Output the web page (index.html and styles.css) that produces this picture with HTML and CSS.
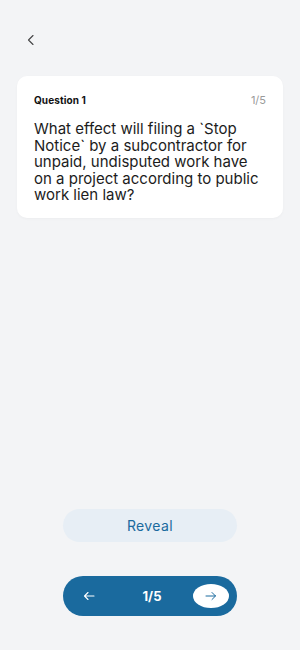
FILE: index.html
```html
<!DOCTYPE html>
<html>
<head>
<meta charset="utf-8">
<link rel="stylesheet" href="styles.css">
</head>
<body>
<div class="screen">
  <div class="topbar">
    <button class="back" aria-label="Back">
      <svg width="10" height="12" viewBox="0 0 10 12"><path d="M7 1.5 L2.5 6 L7 10.5" fill="none" stroke="#444" stroke-width="1.1" stroke-linecap="round" stroke-linejoin="round"/></svg>
    </button>
  </div>
  <div class="card">
    <div class="card-head">
      <span class="qlabel">Question 1</span>
      <span class="qcount">1/5</span>
    </div>
    <p class="qtext">What effect will filing a `Stop Notice` by a subcontractor for unpaid, undisputed work have on a project according to public work lien law?</p>
  </div>
  <div class="spacer"></div>
  <div class="actions">
    <button class="reveal">Reveal</button>
    <div class="pager">
      <button class="prev" aria-label="Previous">
        <svg width="12" height="10" viewBox="0 0 12 10"><path d="M11 5 H1.5 M5 1.5 L1.5 5 L5 8.5" fill="none" stroke="#fff" stroke-width="1.1" stroke-linecap="round" stroke-linejoin="round"/></svg>
      </button>
      <span class="page">1/5</span>
      <button class="next" aria-label="Next">
        <svg width="12" height="10" viewBox="0 0 12 10"><path d="M1 5 H10.5 M7 1.5 L10.5 5 L7 8.5" fill="none" stroke="#1a6a9e" stroke-width="1" stroke-linecap="round" stroke-linejoin="round"/></svg>
      </button>
    </div>
  </div>
</div>
</body>
</html>
```
FILE: styles.css
```css
html, body {
  margin: 0;
  padding: 0;
  background: #f3f4f6;
}
body {
  font-family: "Inter", "Noto Sans", sans-serif;
  color: #111;
}
.screen {
  width: 300px;
  height: 650px;
  display: flex;
  flex-direction: column;
  box-sizing: border-box;
}
.topbar {
  height: 76px;
  padding-left: 25px;
  padding-top: 33px;
  box-sizing: border-box;
}
.back {
  border: 0;
  background: none;
  padding: 0;
  width: 12px;
  height: 14px;
  display: flex;
  align-items: center;
  justify-content: center;
}
.card {
  margin: 0 17px;
  background: #fff;
  border-radius: 10px;
  padding: 18px 17px 14px 17px;
  box-shadow: 0 1px 3px rgba(0,0,0,0.03);
}
.card-head {
  display: flex;
  justify-content: space-between;
  align-items: center;
  height: 12px;
}
.qlabel {
  font-size: 10px;
  font-weight: 700;
  color: #111;
  letter-spacing: 0.1px;
}
.qcount {
  font-size: 11px;
  color: #9a9a9a;
}
.qtext {
  margin: 15px 0 0 0;
  font-size: 15px;
  line-height: 16.5px;
  font-weight: 400;
  color: #1c1c1c;
}
.spacer { flex: 1; }
.actions {
  display: flex;
  flex-direction: column;
  align-items: center;
  padding-bottom: 34px;
}
.reveal {
  width: 174px;
  height: 33px;
  border: 0;
  border-radius: 17px;
  background: #e7eef5;
  color: #1a6a9e;
  font-family: "Inter", "Noto Sans", sans-serif;
  font-size: 14px;
  font-weight: 400;
  letter-spacing: 0.4px;
}
.pager {
  margin-top: 34px;
  width: 174px;
  height: 40px;
  border-radius: 20px;
  background: #1a6a9e;
  display: flex;
  align-items: center;
  justify-content: space-between;
  box-sizing: border-box;
  padding: 0 8px 0 18px;
}
.prev {
  border: 0;
  background: none;
  padding: 0;
  width: 16px;
  height: 16px;
  display: flex;
  align-items: center;
  justify-content: center;
}
.page {
  color: #fff;
  font-size: 13px;
  font-weight: 700;
  margin-left: 14px;
}
.next {
  border: 0;
  background: #fff;
  width: 36px;
  height: 24px;
  border-radius: 50%;
  padding: 0;
  display: flex;
  align-items: center;
  justify-content: center;
}
```
